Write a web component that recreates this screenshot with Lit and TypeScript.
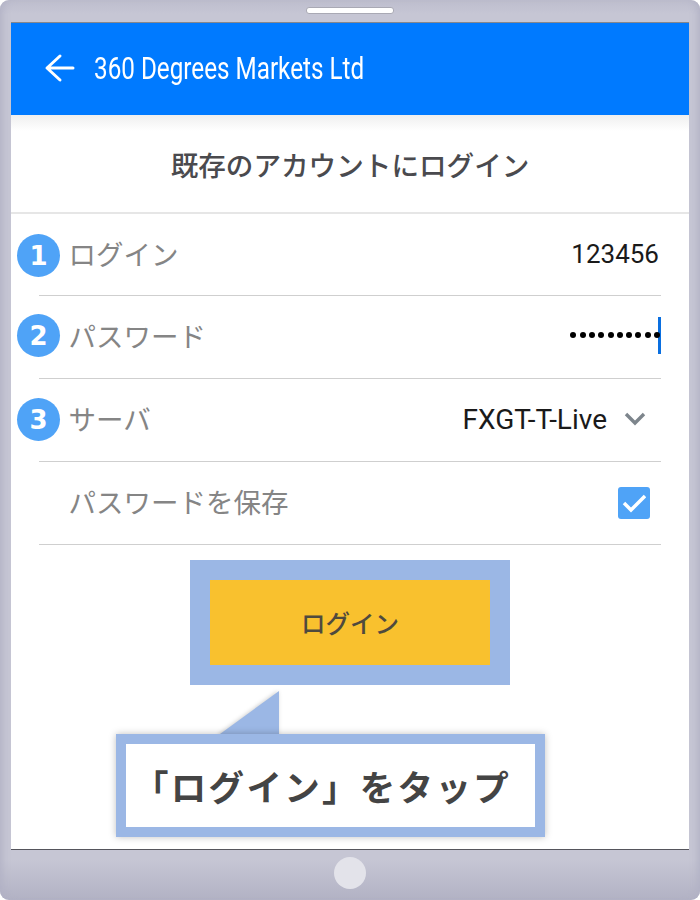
import { LitElement, html, css, svg } from "lit";
import { customElement } from "lit/decorators.js";

const JP = css`"Noto Sans CJK JP", "Noto Sans", sans-serif`;

@customElement("app-root")
export class AppRoot extends LitElement {
  static styles = css`
    :host { display: block; width: 700px; height: 900px; background: #fff; overflow: hidden; }
    * { box-sizing: border-box; }
    .frame {
      width: 700px; height: 900px; border-radius: 9px; padding: 22px 11px 0;
      background: linear-gradient(180deg, #bdbdcd 0, #c6c6d4 14px, #c6c6d4 860px, #b2b2c4 900px);
      box-shadow: inset 8px 0 8px -6px #b0b0c4, inset -8px 0 8px -6px #b0b0c4;
      display: flex; flex-direction: column; position: relative;
      font-family: ${JP};
    }
    .speaker {
      position: absolute; left: 306px; top: 7px; width: 88px; height: 7px;
      background: #fff; border: 1px solid #a9a9b4; border-radius: 3px;
    }
    .screen {
      height: 828px; background: #fff; display: flex; flex-direction: column; position: relative;
      border-bottom: 1px solid #55555c; border-top: 1px solid #85878c; flex: none;
    }
    .appbar {
      height: 92px; background: #007aff; flex: none; display: flex; align-items: center;
      padding-left: 33px; color: #fff; box-shadow: 0 1px 0 #e4e4e4;
    }
    .appbar svg { display: block; flex: none; margin-top: -2px; }
    .apptitle {
      font: 400 30.5px Roboto, sans-serif; white-space: nowrap; margin-left: 18px; margin-top: -1px;
      transform: scaleX(0.795); transform-origin: left center; letter-spacing: 0;
    }
    .heading {
      height: 99px; flex: none; display: flex; align-items: center; justify-content: center;
      font-size: 27.6px; font-weight: 500; color: #4a4a4e;
      border-bottom: 2px solid #e6e6e6;
      background: linear-gradient(180deg, #efefef 0, #fff 16px);
      padding-top: 1px;
    }
    .list { margin: 0 28px; display: flex; flex-direction: column; }
    .row {
      height: 83px; border-bottom: 1px solid #cfcfcf; display: flex; align-items: center;
      justify-content: space-between; position: relative; padding-left: 29.5px;
    }
    .row:first-child { height: 82px; }
    .label { font-size: 27.5px; line-height: 40px; color: #858585; padding-bottom: 4px; }
    .num {
      position: absolute; left: -22px; top: 19px; width: 43px; height: 43px; border-radius: 50%;
      background: #4fa3f7; color: #fff; display: flex; align-items: center; justify-content: center;
      font: 700 26px "DejaVu Sans", sans-serif;
    }
    .row:nth-child(1) .num { top: 20px; }
    .row:nth-child(2) .num { top: 18px; }
    .value { font: 400 28px Roboto, sans-serif; color: #1a1a1a; }
    .v1 { font-size: 26px; margin-right: 2px; padding-bottom: 2px; }
    .pw { display: flex; align-items: center; position: relative; padding-bottom: 4px; }
    .dots { display: flex; gap: 3.3px; position: relative; z-index: 1; }
    .dot { width: 6px; height: 6px; border-radius: 50%; background: #000; }
    .caret { width: 3px; height: 37px; background: #0a6fe0; margin-left: -2px; }
    .server { display: flex; align-items: center; margin-right: 15px; gap: 17px; padding-bottom: 2px; }
    .check {
      width: 32px; height: 32px; border-radius: 3px; background: #4fa3f7; margin-right: 11px;
      display: flex; align-items: center; justify-content: center;
    }
    .btnwrap {
      align-self: center; margin-top: 15px; width: 320px; height: 125px;
      border: 20px solid #9bb7e5; background: #f9c12e; display: flex; align-items: center; justify-content: center;
      font-size: 24.5px; font-weight: 500; color: #4f4a3e; flex: none;
    }
    .callout {
      position: absolute; left: 105px; top: 711px; width: 429px; height: 103px;
      border: 10px solid #9bb7e5; background: #fff; box-shadow: 0 0 7px rgba(0,0,0,.25);
      display: flex; align-items: center; justify-content: center; padding-right: 17px;
      font: 700 35.5px ${JP}; color: #444; letter-spacing: 2.3px; white-space: nowrap;
    }
    .tail { position: absolute; left: 205px; top: 668px; display: block; filter: drop-shadow(-1px 0 2px rgba(0,0,0,.2)); }
    .home {
      position: absolute; left: 334px; top: 857px; width: 32px; height: 32px; border-radius: 50%;
      background: #e3e3ea;
    }
  `;

  render() {
    const dots = Array.from({ length: 10 }, () => html`<span class="dot"></span>`);
    return html`
      <div class="frame">
        <div class="speaker"></div>
        <div class="screen">
          <div class="appbar">
            <svg width="32" height="32" viewBox="0 0 32 32" fill="none" stroke="#fff" stroke-width="3" stroke-linecap="round" stroke-linejoin="round">
              ${svg`<path d="M29 16H4M16 4 3 16l13 12" />`}
            </svg>
            <div class="apptitle">360 Degrees Markets Ltd</div>
          </div>
          <div class="heading">既存のアカウントにログイン</div>
          <div class="list">
            <div class="row">
              <span class="num">1</span><span class="label">ログイン</span>
              <span class="value v1">123456</span>
            </div>
            <div class="row">
              <span class="num">2</span><span class="label">パスワード</span>
              <span class="pw"><span class="dots">${dots}</span><span class="caret"></span></span>
            </div>
            <div class="row">
              <span class="num">3</span><span class="label">サーバ</span>
              <span class="server">
                <span class="value">FXGT-T-Live</span>
                <svg width="22" height="14" viewBox="0 0 22 14" fill="none" stroke="#7d858c" stroke-width="3.4">
                  ${svg`<path d="M2 2l9 9 9-9" />`}
                </svg>
              </span>
            </div>
            <div class="row">
              <span class="label">パスワードを保存</span>
              <span class="check">
                <svg width="24" height="20" viewBox="0 0 24 20" fill="none" stroke="#fff" stroke-width="3.5">
                  ${svg`<path d="M2 10l7 7L23 3" />`}
                </svg>
              </span>
            </div>
          </div>
          <div class="btnwrap">ログイン</div>
          <svg class="tail" width="64" height="48" viewBox="0 0 64 48">
            ${svg`<path d="M4 43 63 0v48H4z" fill="#9bb7e5" />`}
          </svg>
          <div class="callout">「ログイン」をタップ</div>
        </div>
        <div class="home"></div>
      </div>
    `;
  }
}
